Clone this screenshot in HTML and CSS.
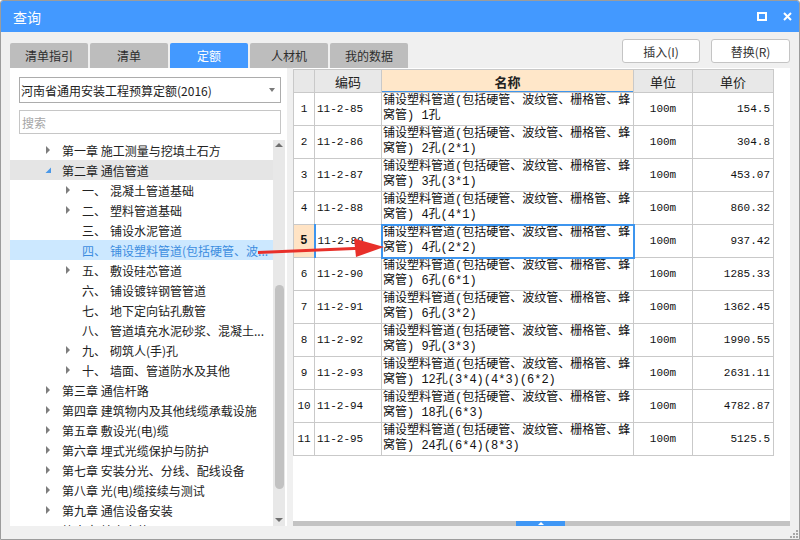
FILE: index.html
```html
<!DOCTYPE html>
<html lang="zh">
<head>
<meta charset="utf-8">
<title>查询</title>
<link rel="stylesheet" href="styles.css">
</head>
<body>
<div class="window">
  <div class="titlebar">
    <span class="title">查询</span>
    <div class="winctl">
      <span class="max"></span>
      <svg class="close" width="9" height="9" viewBox="0 0 9 9"><path d="M1 1L8 8M8 1L1 8" stroke="#fff" stroke-width="2"/></svg>
    </div>
  </div>
  <div class="toolbar">
    <div class="tabs">
      <div class="tab">清单指引</div>
      <div class="tab">清单</div>
      <div class="tab active">定额</div>
      <div class="tab">人材机</div>
      <div class="tab">我的数据</div>
    </div>
    <div class="actions">
      <button class="btn">插入(I)</button>
      <button class="btn wide">替换(R)</button>
    </div>
  </div>
  <div class="main">
    <div class="left">
      <div class="select"><span>河南省通用安装工程预算定额(2016)</span><i class="caret"></i></div>
      <div class="search">搜索</div>
      <div class="treewrap">
        <div class="tree">
          <div class="row l1"><i class="ar"><b class="tri"></b></i><span>第一章 施工测量与挖填土石方</span></div>
          <div class="row l1 hover"><i class="ar"><svg width="7" height="7" viewBox="0 0 7 7"><path d="M6 0.5V6H0.5Z" fill="#4a98e8"/></svg></i><span>第二章 通信管道</span></div>
          <div class="row l2"><i class="ar"><b class="tri"></b></i><span class="no">一、</span><span>混凝土管道基础</span></div>
          <div class="row l2"><i class="ar"><b class="tri"></b></i><span class="no">二、</span><span>塑料管道基础</span></div>
          <div class="row l2"><i class="ar"></i><span class="no">三、</span><span>铺设水泥管道</span></div>
          <div class="row l2 sel"><i class="ar"></i><span class="no">四、</span><span>铺设塑料管道(包括硬管、波...</span></div>
          <div class="row l2"><i class="ar"><b class="tri"></b></i><span class="no">五、</span><span>敷设硅芯管道</span></div>
          <div class="row l2"><i class="ar"></i><span class="no">六、</span><span>铺设镀锌钢管管道</span></div>
          <div class="row l2"><i class="ar"></i><span class="no">七、</span><span>地下定向钻孔敷管</span></div>
          <div class="row l2"><i class="ar"></i><span class="no">八、</span><span>管道填充水泥砂浆、混凝土...</span></div>
          <div class="row l2"><i class="ar"><b class="tri"></b></i><span class="no">九、</span><span>砌筑人(手)孔</span></div>
          <div class="row l2"><i class="ar"><b class="tri"></b></i><span class="no">十、</span><span>墙面、管道防水及其他</span></div>
          <div class="row l1"><i class="ar"><b class="tri"></b></i><span>第三章 通信杆路</span></div>
          <div class="row l1"><i class="ar"><b class="tri"></b></i><span>第四章 建筑物内及其他线缆承载设施</span></div>
          <div class="row l1"><i class="ar"><b class="tri"></b></i><span>第五章 敷设光(电)缆</span></div>
          <div class="row l1"><i class="ar"><b class="tri"></b></i><span>第六章 埋式光缆保护与防护</span></div>
          <div class="row l1"><i class="ar"><b class="tri"></b></i><span>第七章 安装分光、分线、配线设备</span></div>
          <div class="row l1"><i class="ar"><b class="tri"></b></i><span>第八章 光(电)缆接续与测试</span></div>
          <div class="row l1"><i class="ar"><b class="tri"></b></i><span>第九章 通信设备安装</span></div>
          <div class="row l1"><i class="ar"><b class="tri"></b></i><span>第十章 站点安装</span></div>
        </div>
        <div class="vscroll">
          <i class="up"></i>
          <div class="vthumb"></div>
          <i class="down"></i>
        </div>
      </div>
    </div>
    <div class="right">
      <div class="gridwrap">
        <table class="grid">
          <colgroup><col class="c-no"><col class="c-code"><col class="c-name"><col class="c-unit"><col class="c-price"></colgroup>
          <thead>
            <tr><th></th><th>编码</th><th class="cur">名称</th><th>单位</th><th>单价</th></tr>
          </thead>
          <tbody>
            <tr><td class="no">1</td><td class="code">11-2-85</td><td class="name">铺设塑料管道(包括硬管、波纹管、栅格管、蜂<br>窝管) 1孔</td><td class="unit">100m</td><td class="price">154.5</td></tr>
            <tr><td class="no">2</td><td class="code">11-2-86</td><td class="name">铺设塑料管道(包括硬管、波纹管、栅格管、蜂<br>窝管) 2孔(2*1)</td><td class="unit">100m</td><td class="price">304.8</td></tr>
            <tr><td class="no">3</td><td class="code">11-2-87</td><td class="name">铺设塑料管道(包括硬管、波纹管、栅格管、蜂<br>窝管) 3孔(3*1)</td><td class="unit">100m</td><td class="price">453.07</td></tr>
            <tr><td class="no">4</td><td class="code">11-2-88</td><td class="name">铺设塑料管道(包括硬管、波纹管、栅格管、蜂<br>窝管) 4孔(4*1)</td><td class="unit">100m</td><td class="price">860.32</td></tr>
            <tr class="selrow"><td class="no">5</td><td class="code">11-2-89</td><td class="name focus">铺设塑料管道(包括硬管、波纹管、栅格管、蜂<br>窝管) 4孔(2*2)</td><td class="unit">100m</td><td class="price">937.42</td></tr>
            <tr><td class="no">6</td><td class="code">11-2-90</td><td class="name">铺设塑料管道(包括硬管、波纹管、栅格管、蜂<br>窝管) 6孔(6*1)</td><td class="unit">100m</td><td class="price">1285.33</td></tr>
            <tr><td class="no">7</td><td class="code">11-2-91</td><td class="name">铺设塑料管道(包括硬管、波纹管、栅格管、蜂<br>窝管) 6孔(3*2)</td><td class="unit">100m</td><td class="price">1362.45</td></tr>
            <tr><td class="no">8</td><td class="code">11-2-92</td><td class="name">铺设塑料管道(包括硬管、波纹管、栅格管、蜂<br>窝管) 9孔(3*3)</td><td class="unit">100m</td><td class="price">1990.55</td></tr>
            <tr><td class="no">9</td><td class="code">11-2-93</td><td class="name">铺设塑料管道(包括硬管、波纹管、栅格管、蜂<br>窝管) 12孔(3*4)(4*3)(6*2)</td><td class="unit">100m</td><td class="price">2631.11</td></tr>
            <tr><td class="no">10</td><td class="code">11-2-94</td><td class="name">铺设塑料管道(包括硬管、波纹管、栅格管、蜂<br>窝管) 18孔(6*3)</td><td class="unit">100m</td><td class="price">4782.87</td></tr>
            <tr><td class="no">11</td><td class="code">11-2-95</td><td class="name">铺设塑料管道(包括硬管、波纹管、栅格管、蜂<br>窝管) 24孔(6*4)(8*3)</td><td class="unit">100m</td><td class="price">5125.5</td></tr>
          </tbody>
        </table>
      </div>
      <div class="hscroll"><div class="hthumb"><i class="hup"></i></div></div>
    </div>
  </div>
  <div class="footer">
    <svg class="grip" width="8" height="8" viewBox="0 0 8 8"><g fill="#a8a8a8"><rect x="6" y="0" width="2" height="2"/><rect x="3" y="3" width="2" height="2"/><rect x="6" y="3" width="2" height="2"/><rect x="0" y="6" width="2" height="2"/><rect x="3" y="6" width="2" height="2"/><rect x="6" y="6" width="2" height="2"/></g></svg>
  </div>
  <svg class="arrow" width="800" height="540" viewBox="0 0 800 540">
    <path d="M258 252.5L360 248.2" stroke="#e8302a" stroke-width="3" fill="none"/>
    <path d="M384 247L354 238.5L356 257Z" fill="#e8302a"/>
  </svg>
</div>
</body>
</html>
```

FILE: styles.css
```css
* { box-sizing: border-box; }

body {
  margin: 0;
  font-family: "Noto Sans CJK SC", "Liberation Sans", sans-serif;
  font-size: 12px;
  color: #333;
}

.window {
  position: relative;
  width: 800px;
  height: 540px;
  border: 1px solid #9c9c9c;
  border-radius: 3px 3px 0 0;
  background: #f0f0f0;
  display: flex;
  flex-direction: column;
  overflow: hidden;
}

/* title bar */
.titlebar {
  height: 31px;
  flex: none;
  background: #4399ff;
  color: #fff;
  display: flex;
  align-items: center;
  justify-content: space-between;
  padding: 0 7px 0 12px;
}
.title { font-size: 14px; line-height: 1; }
.winctl { display: flex; align-items: center; gap: 16px; }
.max {
  width: 10px;
  height: 9px;
  border: 2px solid #fff;
  display: block;
}
.close { display: block; }

/* toolbar */
.toolbar {
  height: 36px;
  flex: none;
  display: flex;
  justify-content: space-between;
  padding: 0 9px;
}
.tabs { display: flex; gap: 2px; align-self: flex-end; }
.tab {
  width: 78px;
  height: 25px;
  line-height: 25px;
  text-align: center;
  background: #bdbdbd;
  border-radius: 2px 2px 0 0;
  color: #2e2e2e;
  font-size: 12px;
}
.tab.active { background: #4399ff; color: #fff; }
.actions { display: flex; gap: 11px; margin-top: 7px; align-self: flex-start; }
.btn {
  width: 78px;
  height: 24px;
  background: #fff;
  border: 1px solid #c4c4c4;
  border-radius: 3px;
  font-family: "Noto Sans CJK SC", "Liberation Sans", sans-serif;
  font-size: 12px;
  color: #333;
  padding: 0;
}
.btn.wide { width: 79px; }

/* main */
.main {
  height: 458px;
  flex: none;
  display: flex;
  gap: 6px;
  padding: 0 9px;
}

.left {
  width: 277px;
  flex: none;
  background: #fff;
  display: flex;
  flex-direction: column;
}
.select {
  margin: 9px 6px 0 9px;
  height: 26px;
  border: 1px solid #acacac;
  display: flex;
  align-items: center;
  padding-left: 1px;
  color: #222;
  font-size: 12px;
}
.caret {
  margin-left: auto;
  margin-right: 5px;
  width: 0;
  height: 0;
  border-left: 3px solid transparent;
  border-right: 3px solid transparent;
  border-top: 4px solid #7a7a7a;
}
.search {
  margin: 7px 6px 0 9px;
  height: 24px;
  border: 1px solid #c6c6c6;
  display: flex;
  align-items: center;
  padding-left: 2px;
  color: #a6a6a6;
}
.treewrap {
  margin-top: 6px;
  flex: 1;
  display: flex;
  overflow: hidden;
  padding-right: 2px;
}
.tree { flex: 1; min-width: 0; }
.row {
  height: 20px;
  display: flex;
  align-items: center;
  white-space: nowrap;
  color: #222;
}
.row.l1 { padding-left: 31px; }
.row.l2 { padding-left: 51px; }
.ar {
  width: 14px;
  height: 20px;
  margin-right: 7px;
  display: flex;
  align-items: center;
  justify-content: center;
  flex: none;
}
.tri {
  width: 0;
  height: 0;
  border-top: 4px solid transparent;
  border-bottom: 4px solid transparent;
  border-left: 4px solid #7d7d7d;
}
.row .no { width: 28px; flex: none; }
.row.hover { background: #e5e5e5; }
.row.sel { background: #cce8ff; color: #3c8de0; }

.vscroll {
  width: 12px;
  flex: none;
  background: #e8e8e8;
  display: flex;
  flex-direction: column;
  align-items: center;
}
.up, .down {
  width: 0;
  height: 0;
  border-left: 4px solid transparent;
  border-right: 4px solid transparent;
}
.up { border-bottom: 4px solid #707070; margin-top: 3px; }
.down { border-top: 4px solid #707070; margin-top: auto; margin-bottom: 4px; }
.vthumb {
  width: 9px;
  height: 204px;
  margin-top: 138px;
  background: #c2c2c2;
  border-radius: 5px;
}

/* right grid */
.right {
  flex: 1;
  background: #fff;
  display: flex;
  flex-direction: column;
}
.gridwrap { flex: 1; overflow: hidden; padding-top: 1px; }
.grid {
  border-collapse: collapse;
  table-layout: fixed;
  width: 480px;
}
.c-no { width: 21px; }
.c-code { width: 67px; }
.c-name { width: 252px; }
.c-unit { width: 59px; }
.c-price { width: 81px; }

.grid th, .grid td {
  border: 1px solid #c9c9c9;
  padding: 0;
  overflow: hidden;
  white-space: nowrap;
}
.grid th {
  height: 23px;
  background: #e8e8e8;
  font-weight: normal;
  color: #222;
  font-size: 13px;
  text-align: center;
}
.grid th.cur {
  background: #ffe7c9;
  font-weight: bold;
  box-shadow: inset 0 -1px 0 #3d95ee;
}
.grid td {
  height: 33px;
  color: #111;
  vertical-align: middle;
}
.grid td.no {
  text-align: center;
  font-family: "Liberation Mono", monospace;
  font-size: 11px;
}
.grid td.code {
  padding-left: 2px;
  font-family: "Liberation Mono", monospace;
  font-size: 11px;
}
.grid td.name {
  padding-left: 1px;
  font-family: "Liberation Mono", "Noto Sans CJK SC", monospace;
  font-size: 12px;
  line-height: 15px;
}
.grid td.unit {
  text-align: center;
  font-family: "Liberation Mono", monospace;
  font-size: 11px;
}
.grid td.price {
  text-align: right;
  padding-right: 3px;
  font-family: "Liberation Mono", monospace;
  font-size: 11px;
}
.selrow td.no {
  background: #ffe3c4;
  font-weight: bold;
  font-size: 12px;
  border-right: 2px solid #3d95ee;
}
.grid td.focus { outline: 2px solid #3d95ee; outline-offset: -1px; }

.hscroll {
  height: 5px;
  flex: none;
  background: #c3c3c3;
  padding-left: 223px;
}
.hthumb {
  width: 49px;
  height: 5px;
  background: #3f97f5;
  display: flex;
  justify-content: center;
  align-items: center;
}
.hup {
  width: 0;
  height: 0;
  border-left: 3px solid transparent;
  border-right: 3px solid transparent;
  border-bottom: 3px solid #fff;
}

.footer {
  flex: 1;
  display: flex;
  justify-content: flex-end;
  align-items: flex-end;
  padding: 0 1px 1px 0;
}
.grip { display: block; }

.arrow {
  position: absolute;
  left: -1px;
  top: -1px;
  pointer-events: none;
}
```
